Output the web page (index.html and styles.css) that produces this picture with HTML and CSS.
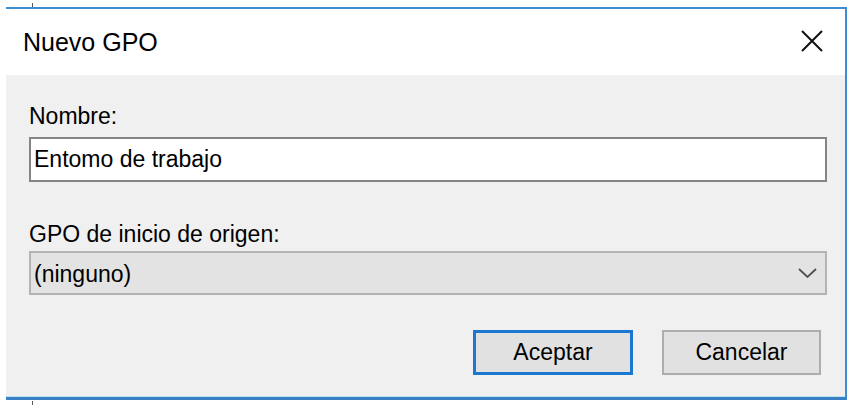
FILE: index.html
```html
<!DOCTYPE html>
<html lang="es">
<head>
<meta charset="utf-8">
<title>Nuevo GPO</title>
<link rel="stylesheet" href="styles.css">
</head>
<body>
<div class="tick tick-top"></div>
<div class="dialog">
  <div class="titlebar">
    <span class="title">Nuevo GPO</span>
    <svg class="close" width="22" height="22" viewBox="0 0 22 22" aria-label="Cerrar">
      <path d="M1 1 L21 21 M21 1 L1 21" stroke="#111" stroke-width="2" fill="none"/>
    </svg>
  </div>
  <div class="body">
    <label class="label label-name" for="nombre">Nombre:</label>
    <input id="nombre" class="textbox" type="text" value="Entomo de trabajo">
    <div class="label label-origin">GPO de inicio de origen:</div>
    <div class="combo" role="combobox">
      <span class="combo-text">(ninguno)</span>
      <svg class="chevron" width="19" height="10" viewBox="0 0 19 10">
        <path d="M1 1 L9.5 9 L18 1" stroke="#505050" stroke-width="1.8" fill="none"/>
      </svg>
    </div>
    <div class="buttons">
      <button class="btn btn-default" type="button">Aceptar</button>
      <button class="btn" type="button">Cancelar</button>
    </div>
  </div>
</div>
<div class="tick tick-bottom"></div>
</body>
</html>
```

FILE: styles.css
```css
html, body {
  margin: 0;
  padding: 0;
  background: #ffffff;
}

body {
  width: 856px;
  height: 410px;
  overflow: hidden;
  font-family: "Liberation Sans", Arial, sans-serif;
  color: #000;
}

.tick {
  width: 1px;
  background: #5a5a5a;
  margin-left: 32px;
}

.tick-top {
  margin-top: 3px;
  height: 4px;
}

.tick-bottom {
  margin-top: 1px;
  height: 4px;
}

.dialog {
  margin-left: 6px;
  width: 841px;
  height: 393px;
  box-sizing: border-box;
  border-top: 2px solid #3d8bd0;
  border-right: 2px solid #3d8bd0;
  border-bottom: 3px solid #3a80c4;
  display: flex;
  flex-direction: column;
  background: #f0f0f0;
}

.titlebar {
  height: 66px;
  flex: none;
  background: #ffffff;
  display: flex;
  align-items: center;
  justify-content: space-between;
  padding: 0 22px 0 17px;
}

.title {
  font-size: 25px;
  color: #000;
}

.close {
  display: block;
  margin-top: -2px;
}

.body {
  flex: 1;
  display: flex;
  flex-direction: column;
  padding: 27px 18px 0 23px;
  border-bottom: 1px solid #b8e6f5;
}

.label {
  font-size: 23px;
  line-height: 28px;
  height: 28px;
}

.label-name {
  margin-bottom: 7px;
}

.textbox {
  display: block;
  width: 100%;
  height: 45px;
  box-sizing: border-box;
  margin: 0;
  border: 2px solid #858585;
  background: #ffffff;
  padding: 0 3px;
  font-family: "Liberation Sans", Arial, sans-serif;
  font-size: 23px;
  color: #000;
  outline: none;
}

.label-origin {
  margin-top: 38px;
  margin-bottom: 3px;
}

.combo {
  height: 44px;
  box-sizing: border-box;
  border: 2px solid #b4b4b4;
  background: #e3e3e3;
  display: flex;
  align-items: center;
  justify-content: space-between;
  padding: 2px 8px 0 3px;
  font-size: 23px;
}

.chevron {
  display: block;
  margin-top: -2px;
}

.buttons {
  display: flex;
  justify-content: flex-end;
  gap: 29px;
  margin-top: 35px;
  margin-right: 6px;
}

.btn {
  width: 159px;
  height: 45px;
  box-sizing: border-box;
  margin: 0;
  padding: 0;
  border: 2px solid #adadad;
  background: #e1e1e1;
  font-family: "Liberation Sans", Arial, sans-serif;
  font-size: 23px;
  color: #000;
}

.btn-default {
  width: 160px;
  border: 3px solid #1a78d0;
}
```
